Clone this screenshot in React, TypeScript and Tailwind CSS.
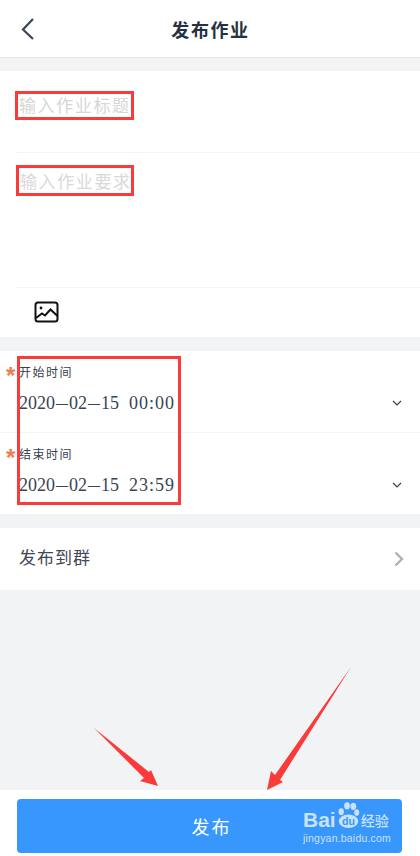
const cjk = "font-['Noto_Sans_CJK_SC','Noto_Sans',sans-serif]";

const Chevron = () => (
  <svg width="10" height="6" viewBox="0 0 10 6" fill="none" stroke="#374151" strokeWidth="1.2" className="mr-[18px] mb-px">
    <path d="M1 1l4 4 4-4" />
  </svg>
);

const Dash = () => <span className="mx-px text-[12px] font-bold">—</span>;

const TimeRow = ({ label, date, time }: { label: string; date: string[]; time: string }) => (
  <div className="relative h-[81px] pl-[19px] pt-[12px]">
    <span className="absolute left-[6px] top-[13px] font-['Liberation_Sans',sans-serif] text-[24px] font-bold leading-[24px] text-[#f47a4a]">*</span>
    <div className={`${cjk} text-[12px] leading-[18px] tracking-[1.5px] text-[#374151]`}>{label}</div>
    <div className="mt-[10px] flex items-center justify-between">
      <div className="flex items-center gap-[10px] font-['Liberation_Serif',serif] text-[18px] leading-[24px] text-[#3a4452]">
        <span className="flex items-center">
          {date[0]}
          <Dash />
          {date[1]}
          <Dash />
          {date[2]}
        </span>
        <span className="tracking-[1px]">{time}</span>
      </div>
      <Chevron />
    </div>
  </div>
);

const App = () => {
  return (
    <div className={`relative flex h-[856px] w-[420px] flex-col overflow-hidden bg-[#f2f3f5] ${cjk}`}>
      <div className="relative flex h-[58px] items-center justify-center border-b border-[#e5e5e5] bg-white">
        <svg width="14" height="24" viewBox="0 0 14 24" fill="none" stroke="#3a4654" strokeWidth="2.2" className="absolute left-[21px] top-[17px]">
          <path d="M12 2L2 12.5 12 22" />
        </svg>
        <span className="pl-[1px] text-[18px] font-bold leading-none tracking-[1.6px] text-[#26323f]">发布作业</span>
      </div>

      <div className="mt-[13px] bg-white">
        <div className="ml-[17px] h-[82px] border-b border-[#f3f3f3] pl-[2px] pt-[23px] text-[17px] leading-[22px] tracking-[1.6px] text-[#d6d6d6]">
          输入作业标题
        </div>
        <div className="ml-[17px] h-[135px] border-b border-[#f3f3f3] pl-[3px] pt-[17px] text-[17px] leading-[22px] tracking-[1.6px] text-[#d9d9d9]">
          输入作业要求
        </div>
        <div className="flex h-[49px] items-start pl-[34px] pt-[13px]">
          <svg width="26" height="22" viewBox="0 0 26 22" fill="none" stroke="#111" strokeWidth="2">
            <rect x="1.5" y="1.5" width="22" height="19" rx="2.5" />
            <circle cx="7" cy="7" r="1.4" fill="#111" stroke="none" />
            <path d="M2 17l6-4.5 3 2 5.5-6 7 6.5" />
          </svg>
        </div>
      </div>

      <div className="mt-[14px] bg-white">
        <div className="border-b border-[#f3f3f3]">
          <TimeRow label="开始时间" date={["2020", "02", "15"]} time="00:00" />
        </div>
        <TimeRow label="结束时间" date={["2020", "02", "15"]} time="23:59" />
      </div>

      <div className="mt-[14px] flex h-[62px] items-center justify-between bg-white pb-[5px] pl-[19px] pr-[15px]">
        <span className="text-[17px] leading-none tracking-[1px] text-[#3f4854]">发布到群</span>
        <svg width="12" height="16" viewBox="0 0 12 16" fill="none" stroke="#aeb1b5" strokeWidth="2.4" className="mt-[5px]">
          <path d="M2.5 1.5L9 8l-6.5 6.5" />
        </svg>
      </div>

      <div className="flex-1" />

      <div className="flex h-[66px] justify-center bg-white pt-[9px]">
        <button className="ml-[-1px] flex h-[54px] w-[385px] items-center justify-center rounded-[4px] bg-[#3797fd] pl-[4px] text-[18px] tracking-[2px] text-white">
          发布
        </button>
      </div>

      {/* annotation boxes */}
      <div className="absolute left-[15px] top-[91px] h-[29px] w-[119px] border-[3px] border-[#fb3a3a]" />
      <div className="absolute left-[16px] top-[165px] h-[31px] w-[118px] border-[3px] border-[#fb3a3a]" />
      <div className="absolute left-[17px] top-[356px] h-[149px] w-[164px] border-[3px] border-[#fb3a3a]" />

      {/* annotation arrows */}
      <svg width="420" height="856" viewBox="0 0 420 856" className="absolute left-0 top-0" fill="#fb3a3a">
        <path d="M94 728L149 772 151 770 158 786 140 781 144 778Z" />
        <path d="M351 667L280 780 283 782 267 790 271 771 275 775Z" />
      </svg>

      {/* baidu watermark */}
      <div className="absolute left-[303px] top-[801px] flex w-[90px] flex-col items-start text-[#c9e2fe]">
        <div className="flex h-[30px] items-end">
          <span className="font-['Liberation_Sans',sans-serif] text-[21px] font-bold leading-[22px]">Bai</span>
          <svg width="24" height="30" viewBox="0 0 24 31" fill="#c9e2fe">
            <ellipse cx="5" cy="11" rx="2.8" ry="3.6" />
            <ellipse cx="11" cy="5" rx="3" ry="3.8" />
            <ellipse cx="17.5" cy="5.5" rx="3" ry="3.8" />
            <ellipse cx="21" cy="12" rx="2.6" ry="3.4" />
            <ellipse cx="12.5" cy="21" rx="10" ry="7" />
            <text x="12.5" y="25" textAnchor="middle" fontSize="11" fontWeight="700" fontFamily="Liberation Sans" fill="#3797fd">du</text>
          </svg>
          <span className="ml-[1px] text-[14px] font-medium leading-[22px]">经验</span>
        </div>
        <span className="mt-[1px] whitespace-nowrap font-['Liberation_Sans',sans-serif] text-[10.5px] leading-[12px] tracking-[0.2px]">jingyan.baidu.com</span>
      </div>
    </div>
  );
};

export default App;
